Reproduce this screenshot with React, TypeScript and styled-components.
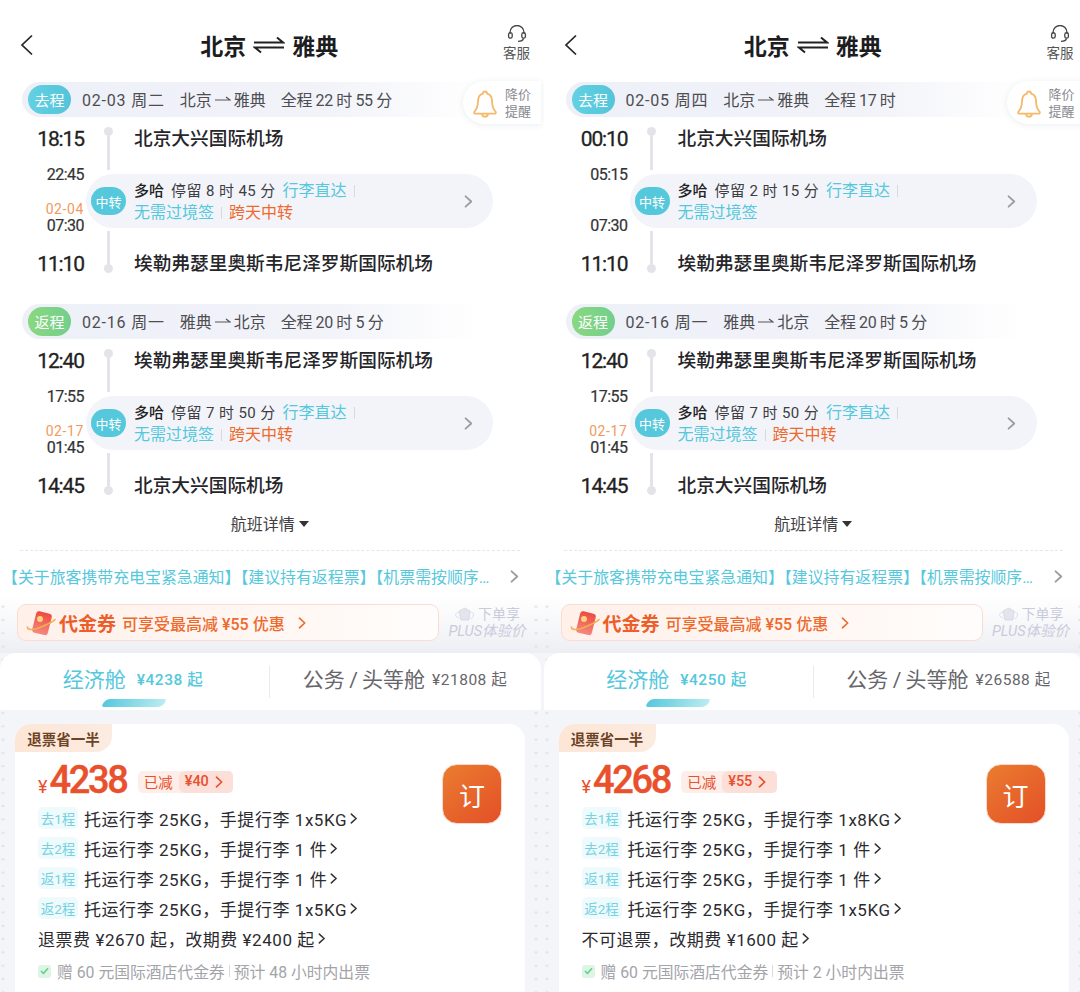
import React from "react"
import styled, { createGlobalStyle } from "styled-components"

const FONT = `Roboto, "Noto Sans CJK SC", "Noto Sans", sans-serif`
const TEAL = "#55c8dc"
const ORANGE = "#ee6a2c"

const GlobalStyle = createGlobalStyle`
    html, body {
        margin: 0;
        padding: 0;
        background: #fff;
        font-family: ${FONT};
    }
    * { box-sizing: border-box; }
`

const Screen = styled.div`
    display: flex;
    width: 1080px;
    height: 992px;
    overflow: hidden;
    background: #fff;
`
const Panel = styled.div`
    flex: 0 0 543.5px;
    height: 992px;
    overflow: hidden;
    display: flex;
    flex-direction: column;
    background: #fff;
`
const Header = styled.div`
    height: 82px;
    display: flex;
    align-items: center;
    justify-content: center;
    position: relative;
    padding-top: 8px;
`
const Back = styled.svg`
    position: absolute;
    left: 20px;
    top: 34px;
`
const Title = styled.div`
    display: flex;
    align-items: center;
    gap: 7px;
    font-size: 23px;
    font-weight: 700;
    color: #1d1d1f;
    margin-right: 5px;
`
const Service = styled.div`
    position: absolute;
    right: 13.5px;
    top: 25px;
    display: flex;
    flex-direction: column;
    align-items: center;
    font-size: 13.5px;
    line-height: 20px;
    color: #555;
`
const Leg = styled.div`
    display: flex;
    flex-direction: column;
    padding-left: 22px;
    & + & {
        margin-top: 28px;
    }
`
const SegmentBar = styled.div`
    position: relative;
    height: 35px;
    width: 498px;
    display: flex;
    align-items: center;
    gap: 15px;
    padding: 0 0 1px 6px;
    margin-bottom: 10px;
    border-radius: 18px 0 0 18px;
    font-size: 16px;
    color: #4d4d52;
    background: linear-gradient(90deg, #eef0f8 0%, #f2f3f9 60%, #ffffff 92%);
`
const SegmentTag = styled.span<{ $back?: boolean }>`
    width: 43px;
    height: 29px;
    margin-right: -4px;
    border-radius: 15px;
    display: flex;
    align-items: center;
    justify-content: center;
    font-size: 15px;
    color: #fff;
    background: ${(p) => (p.$back ? "linear-gradient(90deg, #8ad87f, #72cf8c)" : "linear-gradient(90deg, #63d1e2, #54c4da)")};
`
const DateText = styled.span`
    letter-spacing: 0.8px;
    margin-top: -1px;
`
const TotalText = styled.span`
    letter-spacing: -0.4px;
    margin-top: -1px;
`
const RouteText = styled.span`
    display: flex;
    align-items: center;
    gap: 3px;
    margin-top: -1px;
`
const PriceAlert = styled.div`
    position: absolute;
    left: 441px;
    top: -1px;
    width: 78px;
    height: 43px;
    display: flex;
    align-items: center;
    gap: 8px;
    padding-left: 10px;
    border-radius: 22px 0 0 22px;
    background: #fff;
    box-shadow: 0 1px 6px rgba(60, 70, 100, 0.1);
    svg {
        margin-top: 3px;
    }
`
const AlertText = styled.span`
    font-size: 13px;
    line-height: 17px;
    color: #8a8a90;
    width: 28px;
`
const StopRow = styled.div<{ $last?: boolean }>`
    height: ${(p) => (p.$last ? "48px" : "47px")};
    display: flex;
    align-items: ${(p) => (p.$last ? "flex-end" : "flex-start")};
`
const TimeCell = styled.div`
    width: 62px;
    text-align: right;
    font-size: 21px;
    font-weight: 400;
    line-height: 24px;
    letter-spacing: -1.1px;
    color: #222;
    -webkit-text-stroke: 0.3px #222;
`
const Rail = styled.div<{ $last?: boolean }>`
    width: 9px;
    height: 100%;
    margin-left: 19.5px;
    margin-right: 21.5px;
    padding: ${(p) => (p.$last ? "3px 0 3px" : "0 0 4px")};
    display: flex;
    flex-direction: ${(p) => (p.$last ? "column-reverse" : "column")};
    align-items: center;
`
const RailDot = styled.i`
    width: 9px;
    height: 9px;
    flex: none;
    border-radius: 50%;
    background: #e2e4e9;
`
const RailLine = styled.i`
    width: 3px;
    flex: 1;
    background: #e2e4e9;
`
const StopName = styled.div`
    font-size: 18.7px;
    font-weight: 500;
    line-height: 24px;
    color: #26262a;
`
const TransferRow = styled.div`
    height: 54px;
    display: flex;
`
const TransferTimes = styled.div`
    width: 62px;
    margin: -8px 0 -7px;
    display: flex;
    flex-direction: column;
    align-items: flex-end;
    justify-content: space-between;
    font-size: 16px;
    line-height: 18px;
    letter-spacing: -0.5px;
    color: #333;
    -webkit-text-stroke: 0.2px #333;
`
const ArriveGroup = styled.div`
    display: flex;
    flex-direction: column;
    align-items: flex-end;
`
const NextDay = styled.span`
    font-size: 14px;
    line-height: 15px;
    letter-spacing: 0.6px;
    color: #f19a5e;
    -webkit-text-stroke: 0;
`
const TransferPill = styled.div`
    width: 407px;
    margin-left: 2px;
    height: 54px;
    border-radius: 27px;
    background: #f3f4fa;
    display: flex;
    align-items: center;
    padding: 0 20px 0 5px;
`
const TransferBadge = styled.span`
    width: 35px;
    height: 28px;
    flex: none;
    border-radius: 14px;
    background: ${TEAL};
    color: #fff;
    font-size: 13px;
    display: flex;
    align-items: center;
    justify-content: center;
`
const TransferInfo = styled.div`
    flex: 1;
    margin-left: 8px;
    padding-top: 2px;
    display: flex;
    flex-direction: column;
    font-size: 15px;
    line-height: 22px;
    color: #3d3d42;
`
const InfoLine = styled.div`
    display: flex;
    align-items: center;
    gap: 7px;
`
const City = styled.b`
    font-weight: 500;
    color: #222;
`
const StayText = styled.span`
    letter-spacing: 0.4px;
`
const Perk = styled.span<{ $hot?: boolean }>`
    font-size: 16px;
    color: ${(p) => (p.$hot ? ORANGE : TEAL)};
`
const Pipe = styled.i`
    width: 1px;
    height: 12px;
    background: #d8dae2;
`
const DetailsLink = styled.div`
    margin-top: 12px;
    height: 26px;
    display: flex;
    align-items: center;
    justify-content: center;
    gap: 4px;
    padding-right: 4px;
    font-size: 16px;
    color: #404044;
`
const Caret = styled.i`
    width: 0;
    height: 0;
    margin-top: 2px;
    border-left: 5px solid transparent;
    border-right: 5px solid transparent;
    border-top: 6px solid #333;
`
const DashedRule = styled.div`
    margin: 14px 24px 0 20px;
    border-top: 1px dashed #e6e7eb;
`
const Notice = styled.div`
    height: 40px;
    margin-top: 5px;
    display: flex;
    align-items: center;
    justify-content: space-between;
    padding: 0 24px 0 2px;
    font-size: 15.9px;
    color: ${TEAL};
    white-space: nowrap;
`
const Lower = styled.div`
    flex: 1;
    display: flex;
    flex-direction: column;
    background-color: #f4f5f9;
    background-image:
        radial-gradient(circle, #e2e4ea 1.2px, transparent 1.5px),
        linear-gradient(180deg, #ffffff 0px, #f3f4f7 40px, #eceef3 57px, #f4f5f9 57px);
    background-size: 533px 13.3px, 100% 100%;
    background-position: -263.5px 4px, 0 0;
`
const PromoRow = styled.div`
    height: 57px;
    display: flex;
    gap: 9px;
    padding: 8px 0 0 17px;
`
const Voucher = styled.div`
    width: 422px;
    height: 37px;
    display: flex;
    align-items: center;
    padding-left: 8px;
    border: 1px solid #fbdcd0;
    border-radius: 9px;
    background: linear-gradient(90deg, #fff0ea, #fff8f5 70%, #fffdfc);
    color: ${ORANGE};
`
const VoucherName = styled.b`
    margin-left: 3px;
    font-size: 19px;
    font-weight: 700;
    color: #ec5f2a;
`
const VoucherText = styled.span`
    margin: 0 10px 0 6px;
    font-size: 16px;
    font-weight: 500;
`
const PlusHint = styled.div`
    width: 78px;
    display: flex;
    flex-direction: column;
    align-items: center;
    font-size: 14px;
    line-height: 18px;
    color: #c9cbdc;
    padding-top: 1px;
`
const PlusTop = styled.div`
    display: flex;
    align-items: center;
    gap: 2px;
`
const PlusLine = styled.i`
    font-size: 14.5px;
    white-space: nowrap;
`
const Tabs = styled.div`
    height: 57px;
    margin-right: 2.5px;
    display: flex;
    align-items: center;
    background: #fff;
    border-radius: 16px 16px 0 0;
`
const Tab = styled.div<{ $active?: boolean }>`
    position: relative;
    height: 100%;
    display: flex;
    align-items: center;
    justify-content: center;
    gap: ${(p) => (p.$active ? "11px" : "7px")};
    padding: 0 ${(p) => (p.$active ? "3px" : "0")} 7px 0;
    flex: ${(p) => (p.$active ? "0 0 269px" : "1")};
    color: ${(p) => (p.$active ? TEAL : "#66666b")};
    &:not(:first-child) {
        &::before {
            content: "";
            position: absolute;
            left: 0;
            top: 13px;
            height: 32px;
            width: 1px;
            background: #e8e9ed;
        }
    }
`
const TabName = styled.span`
    font-size: 21px;
`
const TabPrice = styled.span<{ $active?: boolean }>`
    font-size: 15.5px;
    font-weight: ${(p) => (p.$active ? 500 : 400)};
    letter-spacing: 0.5px;
`
const TabMark = styled.i`
    position: absolute;
    left: 103px;
    bottom: 3px;
    width: 62px;
    height: 8px;
    border-radius: 8px 3px 8px 3px;
    transform: skewX(-18deg);
    background: linear-gradient(90deg, #55c8dc, #bcecf1);
`
const Card = styled.div`
    margin: 14px 18.5px 0 15px;
    flex: 1;
    display: flex;
    flex-direction: column;
    border-radius: 16px 16px 0 0;
    background: #fff;
`
const Ribbon = styled.div`
    align-self: flex-start;
    width: 97px;
    height: 28px;
    display: flex;
    align-items: center;
    justify-content: center;
    border-radius: 16px 0 16px 0;
    background: linear-gradient(90deg, #fde6d6, #fcebe0);
    color: #6d4427;
    font-size: 14.5px;
    font-weight: 700;
`
const CardBody = styled.div`
    display: flex;
    justify-content: space-between;
    padding: 8px 23px 0 23px;
`
const CardMain = styled.div`
    display: flex;
    flex-direction: column;
`
const PriceRow = styled.div`
    height: 40px;
    display: flex;
    align-items: center;
    color: #e9502c;
    margin-bottom: 3px;
`
const Yen = styled.span`
    font-size: 18px;
    margin: 12px 2px 0 0;
`
const Amount = styled.span`
    font-size: 38px;
    font-weight: 500;
    line-height: 40px;
    letter-spacing: -2.3px;
    -webkit-text-stroke: 0.4px #e9502c;
`
const Discount = styled.div`
    margin: 3px 0 0 11px;
    height: 22px;
    display: flex;
    align-items: center;
    border-radius: 5px;
    background: #fdeee9;
    font-size: 14.5px;
    overflow: hidden;
`
const DiscountLabel = styled.span`
    padding: 0 6px;
`
const DiscountValue = styled.span`
    display: flex;
    align-items: center;
    gap: 3px;
    height: 100%;
    padding: 0 10px 0 6px;
    font-weight: 500;
    background: #fbdfd8;
    border-radius: 6px 0 0 6px;
`
const BagRow = styled.div`
    height: 30px;
    display: flex;
    align-items: center;
    font-size: 17px;
    letter-spacing: 0.55px;
    color: #2b2b30;
    white-space: nowrap;
`
const BagTag = styled.span`
    width: 40px;
    height: 22px;
    margin-right: 6px;
    flex: none;
    border-radius: 5px;
    background: #eefafc;
    color: #74d3e2;
    font-size: 13.5px;
    letter-spacing: 0;
    display: flex;
    align-items: center;
    justify-content: center;
`
const Chevron = styled.svg`
    margin-left: 3px;
    flex: none;
`
const Perks = styled.div`
    margin-top: 3px;
    height: 30px;
    display: flex;
    align-items: center;
    gap: 4px;
    font-size: 15.8px;
    color: #a3a4a9;
    white-space: nowrap;
`
const Check = styled.span`
    width: 13px;
    height: 13px;
    margin-right: 2px;
    border-radius: 3px;
    background: #dcf5e4;
    display: flex;
    align-items: center;
    justify-content: center;
`
const BookButton = styled.div`
    width: 60px;
    height: 60px;
    margin-top: 4px;
    flex: none;
    border-radius: 15px;
    border: 1px solid #fbd9c8;
    background: linear-gradient(140deg, #ea7d30, #e44f27);
    color: #fff;
    font-size: 26px;
    display: flex;
    align-items: center;
    justify-content: center;
`

const SmallChevron = ({ size = 10, color = "#333" }: { size?: number; color?: string }) => (
    <Chevron width={size * 0.7} height={size} viewBox="0 0 7 10" fill="none">
        <path d="M1.2 1 L5.6 5 L1.2 9" stroke={color} strokeWidth="1.4" strokeLinecap="round" strokeLinejoin="round" />
    </Chevron>
)

const TitleArrows = () => (
    <svg width="32" height="18" viewBox="0 0 32 18" fill="none">
        <path d="M1 6.5 H30 L24 1.5" stroke="#222" strokeWidth="2" />
        <path d="M31 11.5 H2 L8 16.5" stroke="#222" strokeWidth="2" />
    </svg>
)

const RouteArrow = () => (
    <svg width="16" height="8" viewBox="0 0 16 8" fill="none">
        <path d="M0 5 H15 L11 2" stroke="#55555a" strokeWidth="1.2" />
    </svg>
)

const HeadsetIcon = () => (
    <svg width="20" height="18" viewBox="0 0 20 18" fill="none" stroke="#444" strokeWidth="1.3">
        <path d="M3 9 V7.5 A7 7 0 0 1 17 7.5 V9" />
        <rect x="1.6" y="7.6" width="3.6" height="5.6" rx="1.8" />
        <rect x="14.8" y="7.6" width="3.6" height="5.6" rx="1.8" />
        <path d="M16.5 13.5 C16 15.5 14 16.3 11 16.3" />
    </svg>
)

const BellIcon = () => (
    <svg width="24" height="29" viewBox="0 0 24 29" fill="none" stroke="#f6b968" strokeWidth="1.8" strokeLinejoin="round">
        <path d="M12 1.5 C13.4 1.5 14 2.5 14 3.6 C17.6 4.6 19 7.6 19 11 C19 16 20 19 22.8 22 C23 23 22.6 23.6 21.8 23.6 H2.2 C1.4 23.6 1 23 1.2 22 C4 19 5 16 5 11 C5 7.6 6.4 4.6 10 3.6 C10 2.5 10.6 1.5 12 1.5 Z" />
        <path d="M9 24 C9.5 27.5 14.5 27.5 15 24" />
    </svg>
)

const VoucherIcon = () => (
    <svg width="30" height="26" viewBox="0 0 30 26" fill="none">
        <defs>
            <linearGradient id="voucherFill" x1="0" y1="0" x2="0" y2="1">
                <stop offset="0" stopColor="#ef4a42" />
                <stop offset="1" stopColor="#f28a80" />
            </linearGradient>
        </defs>
        <rect x="8" y="2" width="16" height="22" rx="3" fill="url(#voucherFill)" transform="rotate(14 15 13)" />
        <circle cx="14" cy="9" r="3" fill="#ffd27a" />
        <path d="M1.5 17 C1 20 7 20.5 14 17.5 C20 15 27 12 29 9.5" stroke="#f2b04a" strokeWidth="1.6" strokeLinecap="round" />
    </svg>
)

const PlusIcon = () => (
    <svg width="22" height="15" viewBox="0 0 22 15" fill="#e3e4ed" stroke="#d0d2e0" strokeWidth="0.7">
        <path d="M5 4 L11 1 L16 4 L15 13 H7 Z" />
        <path d="M16 5 C20 5 21 8 17 12" fill="none" />
        <path d="M5 5 C1 6 0 9 5 11" fill="none" />
    </svg>
)

const CheckMark = () => (
    <svg width="9" height="8" viewBox="0 0 9 8" fill="none">
        <path d="M1 4 L3.5 6.5 L8 1.2" stroke="#5fcf83" strokeWidth="1.5" />
    </svg>
)

type Trip = {
    tag: string
    back?: boolean
    date: string
    from: string
    to: string
    total: string
    depart: string
    origin: string
    landing: string
    nextDay: string
    takeoff: string
    stay: string
    late: boolean
    arrive: string
    destination: string
}

type Bag = { leg: string; allow: string }

type Fare = {
    trips: Trip[]
    notice: string
    voucher: string
    economy: string
    premium: string
    price: string
    cut: string
    bags: Bag[]
    refund: string
    gift: string
}

const DAXING = "北京大兴国际机场"
const ATHENS = "埃勒弗瑟里奥斯韦尼泽罗斯国际机场"
const RETURN_TRIP: Trip = {
    tag: "返程",
    back: true,
    date: "02-16 周一",
    from: "雅典",
    to: "北京",
    total: "全程 20 时 5 分",
    depart: "12:40",
    origin: ATHENS,
    landing: "17:55",
    nextDay: "02-17",
    takeoff: "01:45",
    stay: "停留 7 时 50 分",
    late: true,
    arrive: "14:45",
    destination: DAXING
}

const FARES: Fare[] = [
    {
        trips: [
            {
                tag: "去程",
                date: "02-03 周二",
                from: "北京",
                to: "雅典",
                total: "全程 22 时 55 分",
                depart: "18:15",
                origin: DAXING,
                landing: "22:45",
                nextDay: "02-04",
                takeoff: "07:30",
                stay: "停留 8 时 45 分",
                late: true,
                arrive: "11:10",
                destination: ATHENS
            },
            RETURN_TRIP
        ],
        notice: "【关于旅客携带充电宝紧急通知】【建议持有返程票】【机票需按顺序…",
        voucher: "可享受最高减 ¥55 优惠",
        economy: "¥4238 起",
        premium: "¥21808 起",
        price: "4238",
        cut: "¥40",
        bags: [
            { leg: "去1程", allow: "托运行李 25KG，手提行李 1x5KG" },
            { leg: "去2程", allow: "托运行李 25KG，手提行李 1 件" },
            { leg: "返1程", allow: "托运行李 25KG，手提行李 1 件" },
            { leg: "返2程", allow: "托运行李 25KG，手提行李 1x5KG" }
        ],
        refund: "退票费 ¥2670 起，改期费 ¥2400 起",
        gift: "预计 48 小时内出票"
    },
    {
        trips: [
            {
                tag: "去程",
                date: "02-05 周四",
                from: "北京",
                to: "雅典",
                total: "全程 17 时",
                depart: "00:10",
                origin: DAXING,
                landing: "05:15",
                nextDay: "",
                takeoff: "07:30",
                stay: "停留 2 时 15 分",
                late: false,
                arrive: "11:10",
                destination: ATHENS
            },
            RETURN_TRIP
        ],
        notice: "【关于旅客携带充电宝紧急通知】【建议持有返程票】【机票需按顺序…",
        voucher: "可享受最高减 ¥55 优惠",
        economy: "¥4250 起",
        premium: "¥26588 起",
        price: "4268",
        cut: "¥55",
        bags: [
            { leg: "去1程", allow: "托运行李 25KG，手提行李 1x8KG" },
            { leg: "去2程", allow: "托运行李 25KG，手提行李 1 件" },
            { leg: "返1程", allow: "托运行李 25KG，手提行李 1 件" },
            { leg: "返2程", allow: "托运行李 25KG，手提行李 1x5KG" }
        ],
        refund: "不可退票，改期费 ¥1600 起",
        gift: "预计 2 小时内出票"
    }
]

const TripBlock = ({ trip }: { trip: Trip }) => (
    <Leg>
        <SegmentBar>
            <SegmentTag $back={trip.back}>{trip.tag}</SegmentTag>
            <DateText>{trip.date}</DateText>
            <RouteText>
                {trip.from}
                <RouteArrow />
                {trip.to}
            </RouteText>
            <TotalText>{trip.total}</TotalText>
            {!trip.back && (
                <PriceAlert>
                    <BellIcon />
                    <AlertText>降价提醒</AlertText>
                </PriceAlert>
            )}
        </SegmentBar>
        <StopRow>
            <TimeCell>{trip.depart}</TimeCell>
            <Rail>
                <RailDot />
                <RailLine />
            </Rail>
            <StopName>{trip.origin}</StopName>
        </StopRow>
        <TransferRow>
            <TransferTimes>
                <span>{trip.landing}</span>
                <ArriveGroup>
                    {trip.nextDay && <NextDay>{trip.nextDay}</NextDay>}
                    <span>{trip.takeoff}</span>
                </ArriveGroup>
            </TransferTimes>
            <TransferPill>
                <TransferBadge>中转</TransferBadge>
                <TransferInfo>
                    <InfoLine>
                        <City>多哈</City>
                        <StayText>{trip.stay}</StayText>
                        <Perk>行李直达</Perk>
                        <Pipe />
                    </InfoLine>
                    <InfoLine>
                        <Perk>无需过境签</Perk>
                        {trip.late && <Pipe />}
                        {trip.late && <Perk $hot>跨天中转</Perk>}
                    </InfoLine>
                </TransferInfo>
                <SmallChevron size={13} color="#9a9ba3" />
            </TransferPill>
        </TransferRow>
        <StopRow $last>
            <TimeCell>{trip.arrive}</TimeCell>
            <Rail $last>
                <RailDot />
                <RailLine />
            </Rail>
            <StopName>{trip.destination}</StopName>
        </StopRow>
    </Leg>
)

const FarePanel = ({ fare }: { fare: Fare }) => (
    <Panel>
        <Header>
            <Back width="14" height="22" viewBox="0 0 14 22" fill="none">
                <path d="M12 1.5 L2 11 L12 20.5" stroke="#222" strokeWidth="1.7" />
            </Back>
            <Title>
                北京
                <TitleArrows />
                雅典
            </Title>
            <Service>
                <HeadsetIcon />
                客服
            </Service>
        </Header>
        {fare.trips.map((trip) => (
            <TripBlock key={trip.tag} trip={trip} />
        ))}
        <DetailsLink>
            航班详情
            <Caret />
        </DetailsLink>
        <DashedRule />
        <Notice>
            <span>{fare.notice}</span>
            <SmallChevron size={13} color="#9a9ba3" />
        </Notice>
        <Lower>
            <PromoRow>
                <Voucher>
                    <VoucherIcon />
                    <VoucherName>代金券</VoucherName>
                    <VoucherText>{fare.voucher}</VoucherText>
                    <SmallChevron size={12} color={ORANGE} />
                </Voucher>
                <PlusHint>
                    <PlusTop>
                        <PlusIcon />
                        下单享
                    </PlusTop>
                    <PlusLine>PLUS体验价</PlusLine>
                </PlusHint>
            </PromoRow>
            <Tabs>
                <Tab $active>
                    <TabName>经济舱</TabName>
                    <TabPrice $active>{fare.economy}</TabPrice>
                    <TabMark />
                </Tab>
                <Tab>
                    <TabName>公务{"\u2009"}/{"\u2009"}头等舱</TabName>
                    <TabPrice>{fare.premium}</TabPrice>
                </Tab>
            </Tabs>
            <Card>
                <Ribbon>退票省一半</Ribbon>
                <CardBody>
                    <CardMain>
                        <PriceRow>
                            <Yen>¥</Yen>
                            <Amount>{fare.price}</Amount>
                            <Discount>
                                <DiscountLabel>已减</DiscountLabel>
                                <DiscountValue>
                                    {fare.cut}
                                    <SmallChevron size={12} color="#e9502c" />
                                </DiscountValue>
                            </Discount>
                        </PriceRow>
                        {fare.bags.map((bag) => (
                            <BagRow key={bag.leg}>
                                <BagTag>{bag.leg}</BagTag>
                                {bag.allow}
                                <SmallChevron size={11} />
                            </BagRow>
                        ))}
                        <BagRow>
                            {fare.refund}
                            <SmallChevron size={11} />
                        </BagRow>
                        <Perks>
                            <Check>
                                <CheckMark />
                            </Check>
                            赠 60 元国际酒店代金券
                            <Pipe />
                            {fare.gift}
                        </Perks>
                    </CardMain>
                    <BookButton>订</BookButton>
                </CardBody>
            </Card>
        </Lower>
    </Panel>
)

export default function App() {
    return (
        <Screen>
            <GlobalStyle />
            {FARES.map((fare) => (
                <FarePanel key={fare.price} fare={fare} />
            ))}
        </Screen>
    )
}
